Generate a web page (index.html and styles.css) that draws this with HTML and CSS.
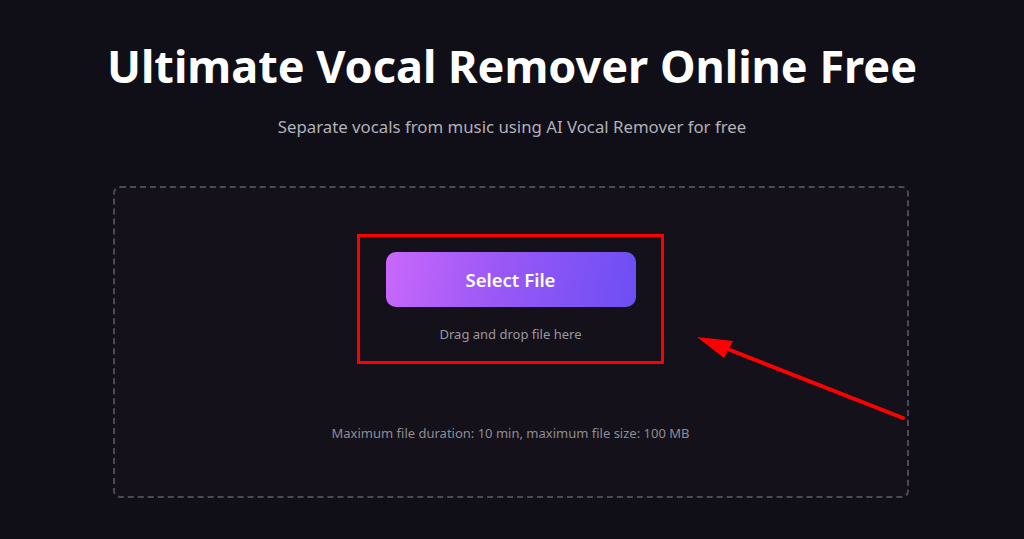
FILE: index.html
```html
<!DOCTYPE html>
<html>
<head>
<meta charset="utf-8">
<link rel="stylesheet" href="styles.css">
</head>
<body>
<div class="page">
  <h1 class="title">Ultimate Vocal Remover Online Free</h1>
  <p class="subtitle">Separate vocals from music using AI Vocal Remover for free</p>
  <div class="dropzone">
    <div class="highlight">
      <button class="select-btn">Select File</button>
      <p class="drag">Drag and drop file here</p>
    </div>
    <p class="limits">Maximum file duration: 10 min, maximum file size: 100 MB</p>
  </div>
  <svg class="arrow" width="1024" height="539" viewBox="0 0 1024 539">
    <line x1="903" y1="418" x2="720" y2="346" stroke="#ff0000" stroke-width="4" stroke-linecap="round"/>
    <polygon points="697,337 733,341 724,358" fill="#ff0000"/>
  </svg>
</div>
</body>
</html>
```
FILE: styles.css
```css
html, body {
  margin: 0;
  padding: 0;
  background: #100e17;
  height: 100%;
}
.page {
  position: relative;
  width: 1024px;
  height: 539px;
  overflow: hidden;
  font-family: "Noto Sans", "Open Sans", sans-serif;
  display: flex;
  flex-direction: column;
  align-items: center;
}
.title {
  margin: 36px 0 0;
  font-size: 45px;
  font-weight: 700;
  line-height: 60px;
  color: #ffffff;
  letter-spacing: 0;
}
.subtitle {
  margin: 20px 0 0;
  font-size: 16.8px;
  line-height: 22px;
  color: #b3b1ba;
}
.dropzone {
  margin-top: 48px;
  margin-right: 3px;
  width: 796px;
  height: 312px;
  border: 2px dashed #4c4a53;
  border-radius: 7px;
  background: #14111b;
  display: flex;
  flex-direction: column;
  align-items: center;
  box-sizing: border-box;
  padding-top: 46px;
}
.highlight {
  width: 307px;
  height: 130px;
  box-sizing: border-box;
  border: 3px solid #ff0000;
  display: flex;
  flex-direction: column;
  align-items: center;
  padding-top: 15px;
}
.select-btn {
  width: 250px;
  height: 55px;
  border: none;
  border-radius: 10px;
  background: linear-gradient(100deg, #c968fb 0%, #9a58f6 45%, #6b4ff4 100%);
  color: #ffffff;
  font-family: "Noto Sans", sans-serif;
  font-size: 18.5px;
  font-weight: 600;
  cursor: pointer;
}
.drag {
  margin: 18px 0 0;
  font-size: 13px;
  line-height: 18px;
  color: #9a98a0;
}
.limits {
  margin: 60px 0 0;
  font-size: 13px;
  line-height: 18px;
  color: #8e8c94;
}
.arrow {
  position: absolute;
  left: 0;
  top: 0;
  pointer-events: none;
}
```
